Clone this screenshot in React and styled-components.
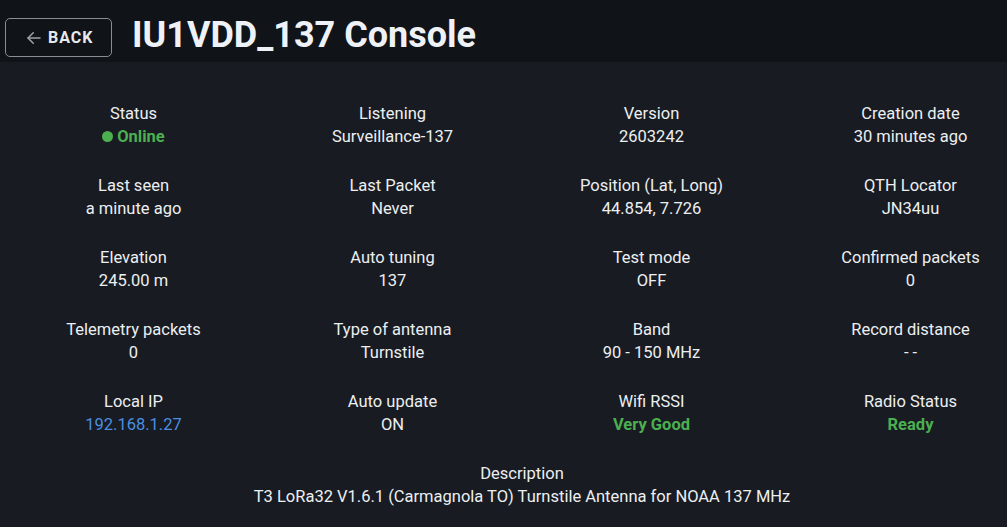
import React from 'react';
import styled, { createGlobalStyle } from 'styled-components';

const GlobalStyle = createGlobalStyle`
  html, body {
    margin: 0;
    padding: 0;
    background: #181b22;
    font-family: Roboto, "Liberation Sans", sans-serif;
    color: #eceff1;
  }
`;

const Page = styled.div`
  width: 1007px;
  height: 527px;
  overflow: hidden;
  background: #181b22;
`;

const Header = styled.header`
  display: flex;
  align-items: center;
  gap: 20px;
  height: 62px;
  box-sizing: border-box;
  padding: 13px 0 0 5px;
  background: #101318;
`;

const BackButton = styled.button`
  display: flex;
  align-items: center;
  gap: 5px;
  height: 39px;
  width: 107px;
  box-sizing: border-box;
  padding: 0 0 0 19px;
  background: transparent;
  border: 1px solid #8a8d93;
  border-radius: 5px;
  color: #e6e9ee;
  font-family: Roboto, "Liberation Sans", sans-serif;
  font-weight: 700;
  font-size: 16px;
  letter-spacing: 1px;
`;

const Title = styled.h1`
  margin: 0 0 5px;
  font-size: 36px;
  line-height: 1;
  font-weight: 700;
  color: #eef2f7;
`;

const Grid = styled.div`
  display: grid;
  grid-template-columns: repeat(4, 259px);
  row-gap: 26px;
  padding: 40px 0 0 4px;
`;

const Cell = styled.div`
  display: flex;
  flex-direction: column;
  align-items: center;
  font-size: 16.5px;
  line-height: 23px;
  white-space: nowrap;
  grid-column: ${({ $wide }) => ($wide ? '1 / -1' : 'auto')};
`;

const Label = styled.div`
  color: #eceff1;
`;

const colors = {
  green: '#4caf50',
  blue: '#4a8fe0',
};

const Value = styled.div`
  display: flex;
  align-items: center;
  gap: 4px;
  color: ${({ $tone }) => colors[$tone] || '#eceff1'};
  font-weight: ${({ $bold }) => ($bold ? 700 : 400)};
`;

const Dot = styled.span`
  width: 11px;
  height: 11px;
  border-radius: 50%;
  background: #4caf50;
`;

const items = [
  ['Status', 'Online', 'green', true, true],
  ['Listening', 'Surveillance-137'],
  ['Version', '2603242'],
  ['Creation date', '30 minutes ago'],
  ['Last seen', 'a minute ago'],
  ['Last Packet', 'Never'],
  ['Position (Lat, Long)', '44.854, 7.726'],
  ['QTH Locator', 'JN34uu'],
  ['Elevation', '245.00 m'],
  ['Auto tuning', '137'],
  ['Test mode', 'OFF'],
  ['Confirmed packets', '0'],
  ['Telemetry packets', '0'],
  ['Type of antenna', 'Turnstile'],
  ['Band', '90 - 150 MHz'],
  ['Record distance', '- -'],
  ['Local IP', '192.168.1.27', 'blue'],
  ['Auto update', 'ON'],
  ['Wifi RSSI', 'Very Good', 'green', true],
  ['Radio Status', 'Ready', 'green', true],
];

const ArrowLeft = () => (
  <svg width="18" height="18" viewBox="0 0 24 24" fill="none" stroke="#9ea3aa" strokeWidth="2" strokeLinecap="round" strokeLinejoin="round">
    <path d="M20 12H4" />
    <path d="M11 5l-7 7 7 7" />
  </svg>
);

export default function App() {
  return (
    <Page>
      <GlobalStyle />
      <Header>
        <BackButton>
          <ArrowLeft />
          BACK
        </BackButton>
        <Title>IU1VDD_137 Console</Title>
      </Header>
      <Grid>
        {items.map(([label, value, tone, bold, dot]) => (
          <Cell key={label}>
            <Label>{label}</Label>
            <Value $tone={tone} $bold={bold}>
              {dot && <Dot />}
              {value}
            </Value>
          </Cell>
        ))}
        <Cell $wide>
          <Label>Description</Label>
          <Value>T3 LoRa32 V1.6.1 (Carmagnola TO) Turnstile Antenna for NOAA 137 MHz</Value>
        </Cell>
      </Grid>
    </Page>
  );
}
